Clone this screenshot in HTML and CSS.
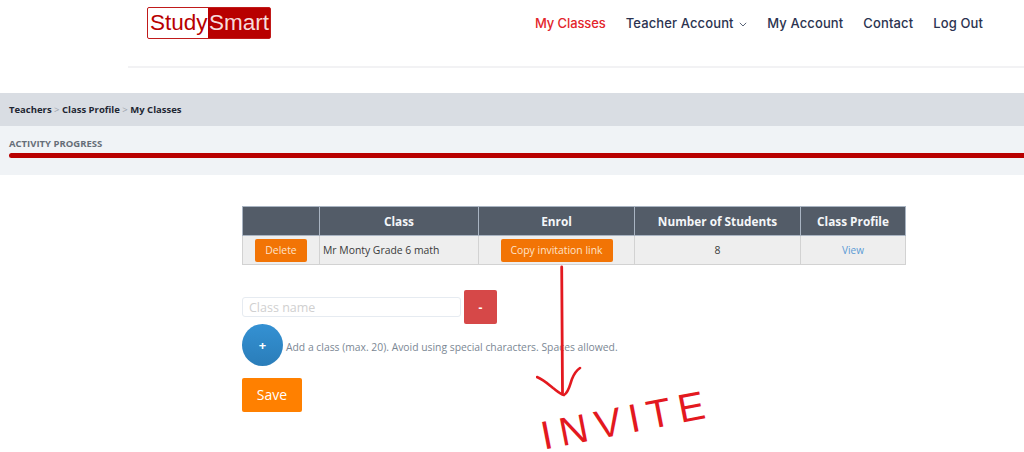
FILE: index.html
```html
<!DOCTYPE html>
<html lang="en">
  <head>
    <meta charset="UTF-8" />
    <meta name="viewport" content="width=device-width, initial-scale=1.0" />
    <title>My Classes - StudySmart</title>
    <link rel="stylesheet" href="styles.css">
  </head>
  <body>
    <header class="site-header">
      <a class="logo" href="#"><span class="logo-study">Study</span><span class="logo-smart">Smart</span></a>
      <nav class="main-nav">
        <a class="active" href="#">My Classes</a>
        <a href="#">Teacher Account
          <svg class="caret" width="8" height="5" viewBox="0 0 8 5"><path d="M.8.8 4 4 7.2.8" fill="none" stroke="#5a6478" stroke-width="1"/></svg>
        </a>
        <a href="#">My Account</a>
        <a href="#">Contact</a>
        <a href="#">Log Out</a>
      </nav>
    </header>

    <div class="breadcrumbs">
      <a href="#">Teachers</a> <span class="sep">&gt;</span>
      <a href="#">Class Profile</a> <span class="sep">&gt;</span>
      <a href="#">My Classes</a>
    </div>

    <section class="progress">
      <div class="progress-label">ACTIVITY PROGRESS</div>
      <div class="progress-bar"></div>
    </section>

    <main class="content">
      <table class="classes">
        <thead>
          <tr>
            <th class="col-action"></th>
            <th class="col-class">Class</th>
            <th class="col-enrol">Enrol</th>
            <th class="col-count">Number of Students</th>
            <th class="col-profile">Class Profile</th>
          </tr>
        </thead>
        <tbody>
          <tr>
            <td class="center"><button class="btn btn-small btn-delete">Delete</button></td>
            <td>Mr Monty Grade 6 math</td>
            <td class="center"><button class="btn btn-small btn-copy">Copy invitation link</button></td>
            <td class="center">8</td>
            <td class="center"><a class="view" href="#">View</a></td>
          </tr>
        </tbody>
      </table>

      <div class="class-row">
        <input class="class-input" type="text" placeholder="Class name" />
        <button class="btn btn-remove">-</button>
      </div>
      <div class="add-row">
        <button class="btn btn-add">+</button>
        <span class="hint">Add a class (max. 20). Avoid using special characters. Spaces allowed.</span>
      </div>
      <button class="btn btn-save">Save</button>
    </main>

    <!-- red pen scribble on top of the screenshot -->
    <svg class="pen-arrow" width="60" height="140" viewBox="0 0 60 140">
      <path d="M25.7 2 26.5 128" fill="none" stroke="#e3191f" stroke-width="2.8" stroke-linecap="round"/>
      <path d="M1 112C8 115 12 119 17 123 21 126 24 129 28 130 33 127 34 119 36 114 38 109 41 105 44 103" fill="none" stroke="#e3191f" stroke-width="2.6" stroke-linecap="round"/>
    </svg>
    <div class="pen-text">INVITE</div>
  </body>
</html>
```

FILE: styles.css
```css
html,
body {
  margin: 0;
  height: 452px;
  overflow: hidden;
  background-color: white;
}
body {
  position: relative;
  font-family: "Open Sans", "Liberation Sans", sans-serif;
  color: #333;
}
a {
  text-decoration: none;
}
.site-header {
  display: flex;
  justify-content: space-between;
  height: 68px;
  margin-left: 128px;
  padding: 7px 41px 0 19px;
  box-sizing: border-box;
  border-bottom: 2px solid #f2f2f4;
}
.logo {
  display: flex;
  width: 124px;
  height: 32px;
  box-sizing: border-box;
  border: 1.5px solid #c01a1a;
  border-radius: 2px;
  font-family: "Liberation Sans", Arial, sans-serif;
  font-size: 22.5px;
  line-height: 29px;
}
.logo-study {
  width: 60px;
  padding-left: 2px;
  color: #b80000;
  box-sizing: border-box;
}
.logo-smart {
  flex: 1;
  padding-left: 1px;
  color: #f6dcdc;
  background-color: #b80000;
}
.main-nav {
  display: flex;
  gap: 20px;
  padding-top: 7px;
  font-family: Inter, Roboto, sans-serif;
  font-size: 13px;
  font-weight: 500;
  letter-spacing: .12px;
  line-height: 18px;
}
.main-nav a {
  color: #2b3350;
}
.main-nav a.active {
  color: #e3252b;
  letter-spacing: -.1px;
}
.caret {
  margin-left: 2px;
  vertical-align: 1px;
}
.breadcrumbs {
  margin-top: 25px;
  height: 33px;
  padding-left: 9px;
  background-color: #d9dde3;
  font-size: 9.5px;
  font-weight: 700;
  line-height: 33px;
}
.breadcrumbs a {
  color: #1f2733;
}
.sep {
  color: #9aa1ab;
  font-weight: 400;
}
.progress {
  height: 49px;
  padding: 11px 0 0 9px;
  box-sizing: border-box;
  background-color: #f0f3f6;
}
.progress-label {
  color: #666e78;
  font-size: 9.5px;
  font-weight: 700;
  line-height: 14px;
}
.progress-bar {
  height: 5px;
  margin-top: 2px;
  border-radius: 3px 0 0 3px;
  background-color: #b80000;
}
.content {
  margin: 31px 0 0 242px;
}
.classes {
  width: 664px;
  table-layout: fixed;
  border-collapse: collapse;
  font-size: 10.4px;
}
.classes th {
  height: 28px;
  padding: 0;
  border: 1px solid #a9b4c2;
  background-color: #535c68;
  color: #f4f6f8;
  font-size: 11.8px;
  font-weight: 700;
}
.classes td {
  height: 28px;
  padding: 0 3px;
  border: 1px solid #d2d2d2;
  background-color: #eeeeee;
  color: #3a3a3a;
}
.col-action {
  width: 76px;
}
.col-class {
  width: 158px;
}
.col-enrol {
  width: 155px;
}
.col-count {
  width: 165px;
}
.center {
  text-align: center;
}
.view {
  color: #5b9bd5;
  font-size: 10px;
}
.btn {
  border: none;
  border-radius: 2px;
  color: white;
  font-family: inherit;
  cursor: pointer;
}
.btn-small {
  height: 23px;
  padding: 0;
  background-color: #f27405;
  color: #fde3cb;
  font-size: 10.4px;
  vertical-align: middle;
}
.btn-delete {
  width: 52px;
}
.btn-copy {
  width: 112px;
}
.class-row {
  display: flex;
  align-items: center;
  gap: 3px;
  margin-top: 25px;
}
.class-input {
  width: 219px;
  height: 20px;
  padding: 0 6px;
  box-sizing: border-box;
  border: 1px solid #e6ebf1;
  border-radius: 3px;
  font-family: inherit;
  font-size: 12.5px;
}
.class-input::placeholder {
  color: #d0d0d0;
}
.btn-remove {
  width: 33px;
  height: 34px;
  background-color: #d64848;
  font-size: 12px;
  font-weight: 700;
}
.add-row {
  display: flex;
  align-items: center;
  gap: 3px;
}
.btn-add {
  width: 41px;
  height: 42px;
  border-radius: 50%;
  background-image: linear-gradient(#3491d3, #2a7db9);
  font-size: 13px;
  font-weight: 700;
}
.hint {
  color: #7b8794;
  font-size: 10.35px;
  padding-top: 4px;
}
.btn-save {
  display: block;
  width: 60px;
  height: 34px;
  margin-top: 12px;
  background-color: #ff8000;
  font-size: 14px;
  padding-bottom: 3px;
}
.pen-arrow {
  position: absolute;
  left: 536px;
  top: 265px;
}
.pen-text {
  position: absolute;
  left: 541px;
  top: 420px;
  color: #e3191f;
  font-family: "Liberation Sans", Arial, sans-serif;
  font-size: 40px;
  letter-spacing: 7.5px;
  line-height: 32px;
  transform: rotate(-11deg);
  transform-origin: left center;
}
```
